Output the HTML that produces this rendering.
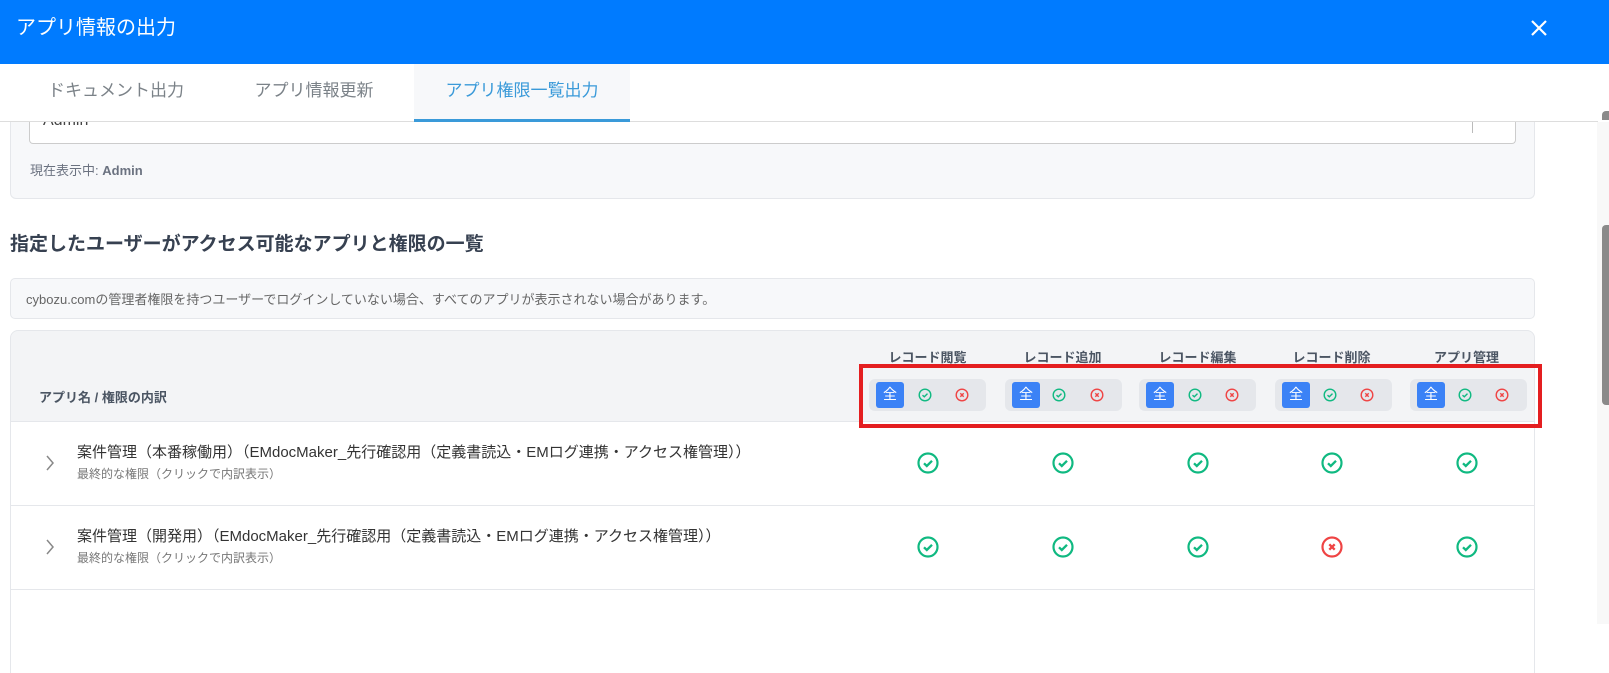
<!DOCTYPE html>
<html><head><meta charset="utf-8"><style>
*{box-sizing:border-box;margin:0;padding:0}
body{width:1609px;height:624px;overflow:hidden;background:#fff;font-family:"Liberation Sans","Noto Sans CJK JP",sans-serif;position:relative;color:#333}
.a{position:absolute}
.hdr{left:0;top:0;width:1609px;height:64px;background:#007bff;color:#fff;font-size:20px;line-height:56px;padding-left:16px}
.tab{top:64px;height:58px;line-height:54px;font-size:17px;color:#7b8288;text-align:center}
.seg{top:379px;width:117px;height:32px;background:#e5e7eb;border-radius:6px}
.all{position:absolute;left:7px;top:3px;width:28px;height:26px;background:#3b82f6;border-radius:3px;color:#fff;font-size:14px;text-align:center;line-height:25px}
.hl{top:347px;width:135px;text-align:center;font-size:13px;font-weight:bold;color:#4b5563}
.row{left:10px;width:1525px;height:84px;border-top:1px solid #e5e7eb;border-left:1px solid #e5e7eb;border-right:1px solid #e5e7eb;background:#fff}
.t1{left:77px;font-size:15px;color:#333}
.t2{left:77px;font-size:12px;color:#777}
</style></head><body>
<div class="a hdr">アプリ情報の出力</div>
<svg class="a" style="left:1530px;top:19px" width="18" height="18" viewBox="0 0 18 18"><path d="M2 2L16 16M16 2L2 16" stroke="#fff" stroke-width="2.2"/></svg>
<div class="a" style="left:0;top:121px;width:1598px;height:1px;background:#ddd"></div>
<div class="a tab" style="left:18px;width:196px">ドキュメント出力</div>
<div class="a tab" style="left:216px;width:196px">アプリ情報更新</div>
<div class="a tab" style="left:414px;width:216px;background:#f7f8fa;color:#3a9ad9;border-bottom:3px solid #3a9ad9">アプリ権限一覧出力</div>

<div class="a" style="left:10px;top:122px;width:1525px;height:77px;background:#f7f8fa;border:1px solid #e5e7eb;border-top:none;border-radius:0 0 6px 6px"></div>
<div class="a" style="left:29px;top:122px;width:1487px;height:22px;background:#fff;border:1px solid #ccc;border-top:none;border-radius:0 0 4px 4px;overflow:hidden"><div style="position:absolute;left:13px;top:-10px;font-size:16px;color:#444">Admin</div></div>
<div class="a" style="left:1472px;top:122px;width:1px;height:11px;background:#bbb"></div>
<div class="a" style="left:30px;top:160px;font-size:13px;color:#6b7280">現在表示中: <b>Admin</b></div>

<div class="a" style="left:10px;top:229px;font-size:19px;font-weight:bold;color:#374151">指定したユーザーがアクセス可能なアプリと権限の一覧</div>
<div class="a" style="left:10px;top:278px;width:1525px;height:41px;background:#f7f8fa;border:1px solid #e5e7eb;border-radius:5px;font-size:13px;color:#666;padding:10px 0 0 15px">cybozu.comの管理者権限を持つユーザーでログインしていない場合、すべてのアプリが表示されない場合があります。</div>

<div class="a" style="left:10px;top:330px;width:1525px;height:92px;background:#f3f4f6;border:1px solid #e5e7eb;border-radius:8px 8px 0 0"></div>
<div class="a" style="left:39px;top:387px;font-size:13px;font-weight:bold;color:#4b5563">アプリ名 / 権限の内訳</div>

<div class="a hl" style="left:860px">レコード閲覧</div>
<div class="a hl" style="left:995px">レコード追加</div>
<div class="a hl" style="left:1130px">レコード編集</div>
<div class="a hl" style="left:1264px">レコード削除</div>
<div class="a hl" style="left:1399px">アプリ管理</div>

<svg width="0" height="0" style="position:absolute"><defs>
<g id="sg"><circle cx="7" cy="7" r="5.8" fill="none" stroke="#10b981" stroke-width="1.4"/><path d="M4.5 7.2L6.3 8.8L9.5 5.6" fill="none" stroke="#10b981" stroke-width="1.4"/></g>
<g id="sr"><circle cx="7" cy="7" r="5.8" fill="none" stroke="#ef4444" stroke-width="1.4"/><path d="M5.3 5.3L8.7 8.7M8.7 5.3L5.3 8.7" stroke="#ef4444" stroke-width="1.4"/></g>
<g id="bg"><circle cx="11" cy="11" r="9.5" fill="none" stroke="#10b981" stroke-width="2.2"/><path d="M7 11.3L9.8 14L15 8.8" fill="none" stroke="#10b981" stroke-width="2.3"/></g>
<g id="br"><circle cx="11" cy="11" r="9.5" fill="none" stroke="#ef4444" stroke-width="2.2"/><path d="M8.3 8.3L13.7 13.7M13.7 8.3L8.3 13.7" stroke="#ef4444" stroke-width="2.3"/></g>
</defs></svg>

<div class="a seg" style="left:869px"><div class="all">全</div><svg class="a" style="left:49px;top:9px" width="14" height="14"><use href="#sg"/></svg><svg class="a" style="left:86px;top:9px" width="14" height="14"><use href="#sr"/></svg></div>
<div class="a seg" style="left:1005px"><div class="all">全</div><svg class="a" style="left:47px;top:9px" width="14" height="14"><use href="#sg"/></svg><svg class="a" style="left:85px;top:9px" width="14" height="14"><use href="#sr"/></svg></div>
<div class="a seg" style="left:1139px"><div class="all">全</div><svg class="a" style="left:49px;top:9px" width="14" height="14"><use href="#sg"/></svg><svg class="a" style="left:86px;top:9px" width="14" height="14"><use href="#sr"/></svg></div>
<div class="a seg" style="left:1275px"><div class="all">全</div><svg class="a" style="left:48px;top:9px" width="14" height="14"><use href="#sg"/></svg><svg class="a" style="left:85px;top:9px" width="14" height="14"><use href="#sr"/></svg></div>
<div class="a seg" style="left:1410px"><div class="all">全</div><svg class="a" style="left:48px;top:9px" width="14" height="14"><use href="#sg"/></svg><svg class="a" style="left:85px;top:9px" width="14" height="14"><use href="#sr"/></svg></div>

<div class="a row" style="top:421px"></div>
<div class="a row" style="top:505px"></div>
<div class="a row" style="top:589px"></div>

<svg class="a" style="left:45px;top:455px" width="10" height="16"><path d="M2 1L8 8L2 15" fill="none" stroke="#888" stroke-width="1.5"/></svg>
<div class="a t1" style="top:441px">案件管理（本番稼働用）（EMdocMaker_先行確認用（定義書読込・EMログ連携・アクセス権管理））</div>
<div class="a t2" style="top:465px">最終的な権限（クリックで内訳表示）</div>
<svg class="a" style="left:45px;top:539px" width="10" height="16"><path d="M2 1L8 8L2 15" fill="none" stroke="#888" stroke-width="1.5"/></svg>
<div class="a t1" style="top:525px">案件管理（開発用）（EMdocMaker_先行確認用（定義書読込・EMログ連携・アクセス権管理））</div>
<div class="a t2" style="top:549px">最終的な権限（クリックで内訳表示）</div>

<svg class="a" style="left:917px;top:452px" width="22" height="22"><use href="#bg"/></svg>
<svg class="a" style="left:1052px;top:452px" width="22" height="22"><use href="#bg"/></svg>
<svg class="a" style="left:1187px;top:452px" width="22" height="22"><use href="#bg"/></svg>
<svg class="a" style="left:1321px;top:452px" width="22" height="22"><use href="#bg"/></svg>
<svg class="a" style="left:1456px;top:452px" width="22" height="22"><use href="#bg"/></svg>
<svg class="a" style="left:917px;top:536px" width="22" height="22"><use href="#bg"/></svg>
<svg class="a" style="left:1052px;top:536px" width="22" height="22"><use href="#bg"/></svg>
<svg class="a" style="left:1187px;top:536px" width="22" height="22"><use href="#bg"/></svg>
<svg class="a" style="left:1321px;top:536px" width="22" height="22"><use href="#br"/></svg>
<svg class="a" style="left:1456px;top:536px" width="22" height="22"><use href="#bg"/></svg>

<div class="a" style="left:859px;top:364px;width:683px;height:64px;border:4px solid #e41e20;z-index:5"></div>

<div class="a" style="left:1597px;top:122px;width:12px;height:502px;background:#f8f8f8"></div>
<div class="a" style="left:1602px;top:225px;width:7px;height:180px;background:#8a8a8a;border-radius:4px 0 0 4px"></div>
<div class="a" style="left:1602px;top:111px;width:7px;height:9px;background:#8a8a8a;border-radius:4px 0 0 0"></div>
</body></html>
